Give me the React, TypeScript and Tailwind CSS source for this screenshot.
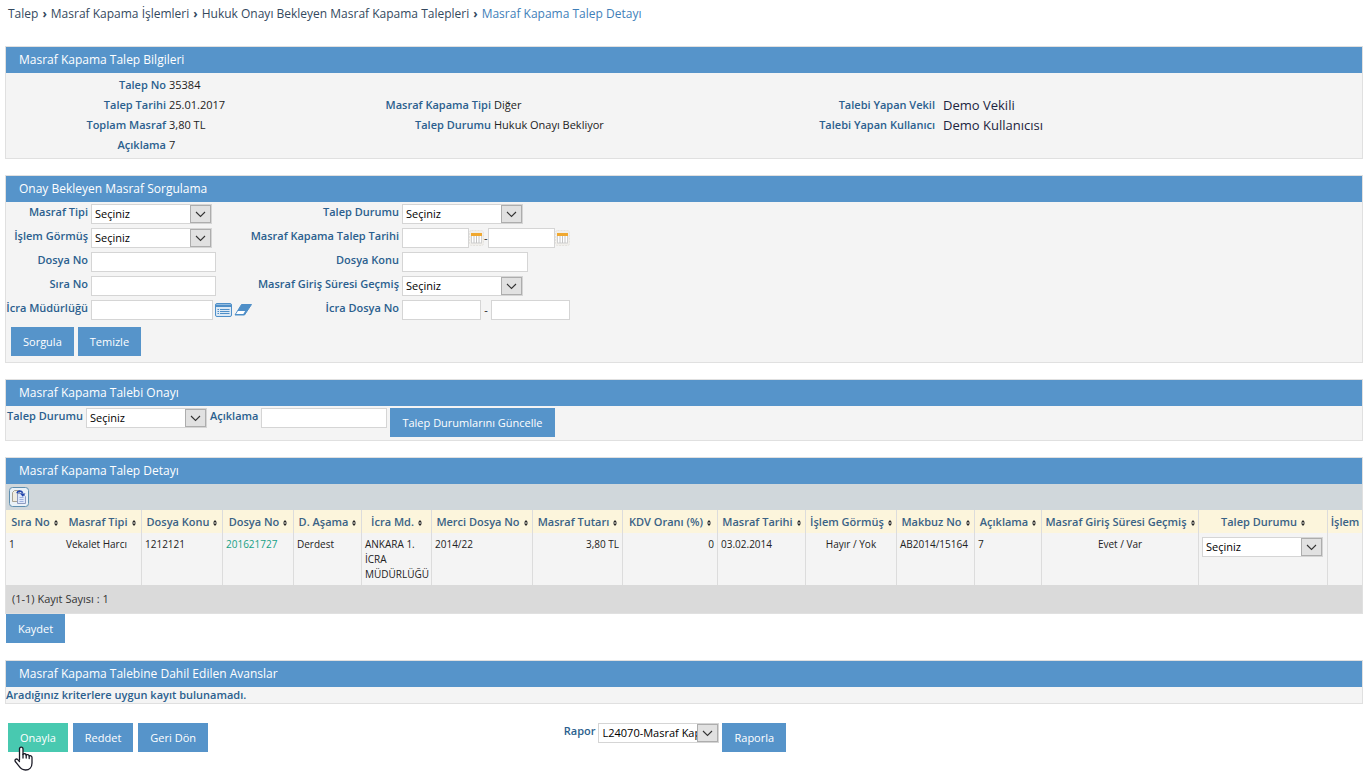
import type { ReactNode } from "react";

type Option = { id: string; label: string; options?: string[] };

function Panel({ title, children }: { title: string; children: ReactNode }) {
  return (
    <section className="mt-4 border border-[#e0e0e0] bg-[#f4f4f4] first:mt-0">
      <h2 className="h-[26px] bg-[#5694ca] pl-[13px] text-[12px] leading-[26px] text-white">{title}</h2>
      {children}
    </section>
  );
}

function Label({ htmlFor, children }: { htmlFor: string; children: ReactNode }) {
  return (
    <label
      htmlFor={htmlFor}
      className="flex justify-end text-[11px] leading-4 font-semibold whitespace-nowrap text-[#2b5f8e]"
    >
      {children}
    </label>
  );
}

function SelectBox({ id, label, options = ["Seçiniz"] }: Option) {
  return (
    <div className="relative h-5 w-[121px] shrink-0">
      <select
        id={id}
        aria-label={label}
        className="block h-5 w-full appearance-none rounded-none border border-[#d5d5d5] bg-white pr-[20px] pl-[3px] text-[11px] leading-[18px] text-black"
      >
        {options.map((o) => (
          <option key={o}>{o}</option>
        ))}
      </select>
      <span className="pointer-events-none absolute top-px right-px flex h-[18px] w-[21px] items-center justify-center border border-[#adadad] bg-[#e1e1e1]">
        <svg width="11" height="7" viewBox="0 0 11 7" fill="none" stroke="#333" strokeWidth="1.1">
          <path d="M1 1l4.5 4.5L10 1" />
        </svg>
      </span>
    </div>
  );
}

function TextBox({ id, label, width }: { id: string; label?: string; width: string }) {
  return (
    <input
      id={id}
      type="text"
      aria-label={label}
      className={`h-5 shrink-0 rounded-none border border-[#d5d5d5] bg-white px-1 text-[11px] ${width}`}
    />
  );
}

function Button({ children, active }: { children: ReactNode; active?: boolean }) {
  return (
    <button
      type="button"
      className={`h-[29px] px-3 text-[11px] leading-[29px] whitespace-nowrap text-white ${
        active ? "bg-[#48c9b0]" : "bg-[#5694ca]"
      }`}
    >
      {children}
    </button>
  );
}

function CalendarButton({ label }: { label: string }) {
  return (
    <button type="button" aria-label={label} className="h-5 shrink-0">
      <svg width="15" height="16" viewBox="0 0 15 16">
        <rect x="0.5" y="0.5" width="14" height="15" rx="2" fill="#f1efeb" stroke="#e4e2de" strokeDasharray="2 1" />
        <rect x="2.5" y="5" width="10" height="8" fill="#fff" stroke="#d0d0d0" />
        <path d="M5 5v8M7.5 5v8M10 5v8" stroke="#c4c4c4" />
        <rect x="2" y="3" width="11" height="3" fill="#f0a830" />
      </svg>
    </button>
  );
}

function SortMark() {
  return (
    <svg className="ml-1 inline-block" width="4" height="6" viewBox="0 0 4 6">
      <path d="M2 0L4 2.500H0zM2 6L0 3.500h4z" fill="#222" />
      <path d="M0 3h4" stroke="#888" strokeWidth="1" />
    </svg>
  );
}

function Info({ label, value, large }: { label: string; value: string; large?: boolean }) {
  return (
    <>
      <dt className="text-right text-[11px] font-semibold whitespace-nowrap text-[#2b5f8e]">{label}</dt>
      <dd className={large ? "pl-2 text-[13px] whitespace-nowrap text-[#1c2440]" : "pl-[3px] text-[11px] whitespace-nowrap text-[#222]"}>
        {value}
      </dd>
    </>
  );
}

function Gap() {
  return (
    <>
      <dt />
      <dd />
    </>
  );
}

const columns = [
  { title: "Sıra No", width: 57 },
  { title: "Masraf Tipi", width: 79 },
  { title: "Dosya Konu", width: 81 },
  { title: "Dosya No", width: 71 },
  { title: "D. Aşama", width: 68 },
  { title: "İcra Md.", width: 70 },
  { title: "Merci Dosya No", width: 101 },
  { title: "Masraf Tutarı", width: 90 },
  { title: "KDV Oranı (%)", width: 95 },
  { title: "Masraf Tarihi", width: 88 },
  { title: "İşlem Görmüş", width: 91 },
  { title: "Makbuz No", width: 78 },
  { title: "Açıklama", width: 67 },
  { title: "Masraf Giriş Süresi Geçmiş", width: 157 },
  { title: "Talep Durumu", width: 129 },
  { title: "İşlem", width: 34 },
];

const cell = "border-r border-[#dcdcdc] px-[3px] pt-1 pb-[3px] align-top last:border-r-0";

export default function App() {
  return (
    <div className="overflow-x-hidden bg-white pr-[3px] pb-[20px] pl-[5px] font-['Open_Sans','Noto_Sans',sans-serif] text-[#222]">
      <nav className="flex gap-1 pt-[6px] pb-6 pl-[3px] text-[12px] leading-4 text-[#34495e]">
        <a href="#talep">Talep</a>
        <span className="font-bold">›</span>
        <a href="#islemler">Masraf Kapama İşlemleri</a>
        <span className="font-bold">›</span>
        <a href="#talepler">Hukuk Onayı Bekleyen Masraf Kapama Talepleri</a>
        <span className="font-bold">›</span>
        <span className="text-[#3f7fb9]">Masraf Kapama Talep Detayı</span>
      </nav>

      <main>
        <Panel title="Masraf Kapama Talep Bilgileri">
          <dl className="grid grid-cols-[160fr_165fr_160fr_220fr_224fr_427fr] pt-[2px] pb-[3px] leading-5">
            <Info label="Talep No" value="35384" />
            <Gap />
            <Gap />
            <Info label="Talep Tarihi" value="25.01.2017" />
            <Info label="Masraf Kapama Tipi" value="Diğer" />
            <Info label="Talebi Yapan Vekil" value="Demo Vekili" large />
            <Info label="Toplam Masraf" value="3,80 TL" />
            <Info label="Talep Durumu" value="Hukuk Onayı Bekliyor" />
            <Info label="Talebi Yapan Kullanıcı" value="Demo Kullanıcısı" large />
            <Info label="Açıklama" value="7" />
          </dl>
        </Panel>

        <Panel title="Onay Bekleyen Masraf Sorgulama">
          <form className="pt-[2px] pb-[6px]">
            <div className="grid auto-rows-[24px] grid-cols-[82px_162px_143px_1fr] items-start gap-x-[3px]">
              <Label htmlFor="masraf-tipi">Masraf Tipi</Label>
              <SelectBox id="masraf-tipi" label="Masraf Tipi" />
              <Label htmlFor="talep-durumu">Talep Durumu</Label>
              <SelectBox id="talep-durumu" label="Talep Durumu" />

              <Label htmlFor="islem-gormus">İşlem Görmüş</Label>
              <SelectBox id="islem-gormus" label="İşlem Görmüş" />
              <Label htmlFor="tarih-baslangic">Masraf Kapama Talep Tarihi</Label>
              <div className="flex text-[11px] leading-5">
                <TextBox id="tarih-baslangic" width="w-[67px]" />
                <CalendarButton label="Başlangıç tarihi seç" />
                -
                <TextBox id="tarih-bitis" label="Bitiş tarihi" width="w-[67px]" />
                <CalendarButton label="Bitiş tarihi seç" />
              </div>

              <Label htmlFor="dosya-no">Dosya No</Label>
              <TextBox id="dosya-no" width="w-[125px]" />
              <Label htmlFor="dosya-konu">Dosya Konu</Label>
              <TextBox id="dosya-konu" width="w-[126px]" />

              <Label htmlFor="sira-no">Sıra No</Label>
              <TextBox id="sira-no" width="w-[125px]" />
              <Label htmlFor="sure-gecmis">Masraf Giriş Süresi Geçmiş</Label>
              <SelectBox id="sure-gecmis" label="Masraf Giriş Süresi Geçmiş" />

              <Label htmlFor="icra-mudurlugu">İcra Müdürlüğü</Label>
              <div className="flex items-center">
                <TextBox id="icra-mudurlugu" width="w-[122px]" />
                <button type="button" aria-label="Listeden seç" className="ml-[2px]">
                  <svg width="17" height="14" viewBox="0 0 17 14">
                    <rect x="0.5" y="0.5" width="16" height="13" rx="1.5" fill="#dce9f5" stroke="#4f8fc8" />
                    <path d="M0.5 1.5h16v2.5h-16z" fill="#4f8fc8" />
                    <path d="M5 6.5h9.5M5 8.5h9.5M5 10.5h9.5M2.5 6.5H4M2.5 8.5H4M2.5 10.5H4" stroke="#4f8fc8" />
                  </svg>
                </button>
                <button type="button" aria-label="Seçimi sil" className="ml-[2px]">
                  <svg width="19" height="14" viewBox="0 0 19 14">
                    <path d="M7.5 1.500H17.500L10.500 12H1z" fill="#4f8fc8" stroke="#4f8fc8" strokeLinejoin="round" />
                    <path d="M4 8h7.200L9.300 11H2z" fill="#fff" />
                  </svg>
                </button>
              </div>
              <Label htmlFor="icra-dosya-1">İcra Dosya No</Label>
              <div className="flex text-[11px] leading-5">
                <TextBox id="icra-dosya-1" width="w-[79px]" />
                <span className="w-[10px] text-center">-</span>
                <TextBox id="icra-dosya-2" label="İcra Dosya No devamı" width="w-[79px]" />
              </div>
            </div>
            <div className="flex gap-1 pt-[3px] pl-[5px]">
              <Button>Sorgula</Button>
              <Button>Temizle</Button>
            </div>
          </form>
        </Panel>

        <Panel title="Masraf Kapama Talebi Onayı">
          <form className="flex items-start gap-[3px] pt-[2px] pr-[3px] pb-[3px] pl-px">
            <Label htmlFor="onay-durumu">Talep Durumu</Label>
            <SelectBox id="onay-durumu" label="Talep Durumu" />
            <Label htmlFor="onay-aciklama">Açıklama</Label>
            <TextBox id="onay-aciklama" width="w-[126px]" />
            <Button>Talep Durumlarını Güncelle</Button>
          </form>
        </Panel>

        <Panel title="Masraf Kapama Talep Detayı">
          <div className="flex h-[26px] items-center bg-[#d0d7db] pl-[3px]">
            <button type="button" aria-label="Dışa aktar">
              <svg width="20" height="20" viewBox="0 0 20 20">
                <rect x="0.5" y="0.5" width="19" height="19" rx="3" fill="#eaf1f7" stroke="#5f8fb0" />
                <path d="M3.5 5.500l2-2h5v11h-7z" fill="#f0ece2" stroke="#a9a293" />
                <path d="M8.500 6.500h5l3 3v7h-8z" fill="#dfe8fa" stroke="#8f9cc0" />
                <path d="M10.500 10.500h4M10.500 12.500h4M10.500 14.500h4" stroke="#9db1de" />
                <path d="M8 6.200c.6-2.600 4.400-3 5.600-.4" fill="none" stroke="#2346ae" strokeWidth="1.700" />
                <path d="M11 6.500h5.500L13.800 9.700z" fill="#2346ae" />
              </svg>
            </button>
          </div>
          <table className="w-full table-fixed border-separate border-spacing-0 text-[10px] leading-[15px]">
            <colgroup>
              {columns.map((c) => (
                <col key={c.title} style={{ width: c.width }} />
              ))}
            </colgroup>
            <thead>
              <tr className="h-[23px] bg-[#fcf5dc] text-[11px] text-[#3a6285]">
                {columns.map((c, i) => (
                  <th
                    key={c.title}
                    className={`border-[#dcdcdc] p-0 font-semibold whitespace-nowrap ${
                      i === 0 || i === columns.length - 1 ? "" : "border-r"
                    }`}
                  >
                    {c.title}
                    {i < columns.length - 1 && <SortMark />}
                  </th>
                ))}
              </tr>
            </thead>
            <tbody>
              <tr>
                <td className="px-[3px] pt-1 align-top">1</td>
                <td className={cell}>Vekalet Harcı</td>
                <td className={cell}>1212121</td>
                <td className={cell}>
                  <a href="#201621727" className="text-[#16a085]">
                    201621727
                  </a>
                </td>
                <td className={cell}>Derdest</td>
                <td className={cell}>ANKARA 1. İCRA MÜDÜRLÜĞÜ</td>
                <td className={cell}>2014/22</td>
                <td className={`${cell} text-right`}>3,80 TL</td>
                <td className={`${cell} text-right`}>0</td>
                <td className={cell}>03.02.2014</td>
                <td className={`${cell} text-center`}>Hayır / Yok</td>
                <td className={cell}>AB2014/15164</td>
                <td className={cell}>7</td>
                <td className={`${cell} text-center`}>Evet / Var</td>
                <td className={cell}>
                  <SelectBox id="satir-durumu" label="Satır talep durumu" />
                </td>
                <td />
              </tr>
            </tbody>
          </table>
          <p className="h-7 bg-[#dadada] pl-[6px] text-[11px] leading-7 text-[#333]">(1-1) Kayıt Sayısı : 1</p>
        </Panel>
        <div className="flex pb-px pl-px">
          <Button>Kaydet</Button>
        </div>

        <Panel title="Masraf Kapama Talebine Dahil Edilen Avanslar">
          <p className="text-[11px] leading-4 font-semibold text-[#2b5f8e]">
            Aradığınız kriterlere uygun kayıt bulunamadı.
          </p>
        </Panel>
      </main>

      <footer className="grid grid-cols-[41%_1fr] pt-[19px]">
        <div className="flex gap-[5px] pl-[3px]">
          <div className="relative">
            <Button active>Onayla</Button>
            <svg
              className="pointer-events-none absolute top-[23px] left-[6px]"
              width="20"
              height="25"
              viewBox="0 0 20 25"
              fill="#fff"
              stroke="#1c1c28"
              strokeWidth="1.3"
              strokeLinejoin="round"
              strokeLinecap="round"
            >
              <path d="M5.500 14V3c0-2.600 3.500-2.600 3.500 0v5.500c.5-1.200 3-1 3.200.6.700-1 2.800-.6 3 .9.900-.8 2.800-.2 2.800 1.500V17c0 4-2.500 7-6.500 7-3.500 0-5-1.500-6.500-3.800L1.300 15.500c-1-1.800 1-3.200 2.400-1.900l1.800 2" />
              <path d="M9 8.500V12M12.200 9.100V12M15.200 10v2.500" fill="none" />
            </svg>
          </div>
          <Button>Reddet</Button>
          <Button>Geri Dön</Button>
        </div>
        <form className="flex items-start gap-[3px] pl-[2px]">
          <Label htmlFor="rapor">Rapor</Label>
          <SelectBox id="rapor" label="Rapor" options={["L24070-Masraf Kapama"]} />
          <Button>Raporla</Button>
        </form>
      </footer>
    </div>
  );
}
